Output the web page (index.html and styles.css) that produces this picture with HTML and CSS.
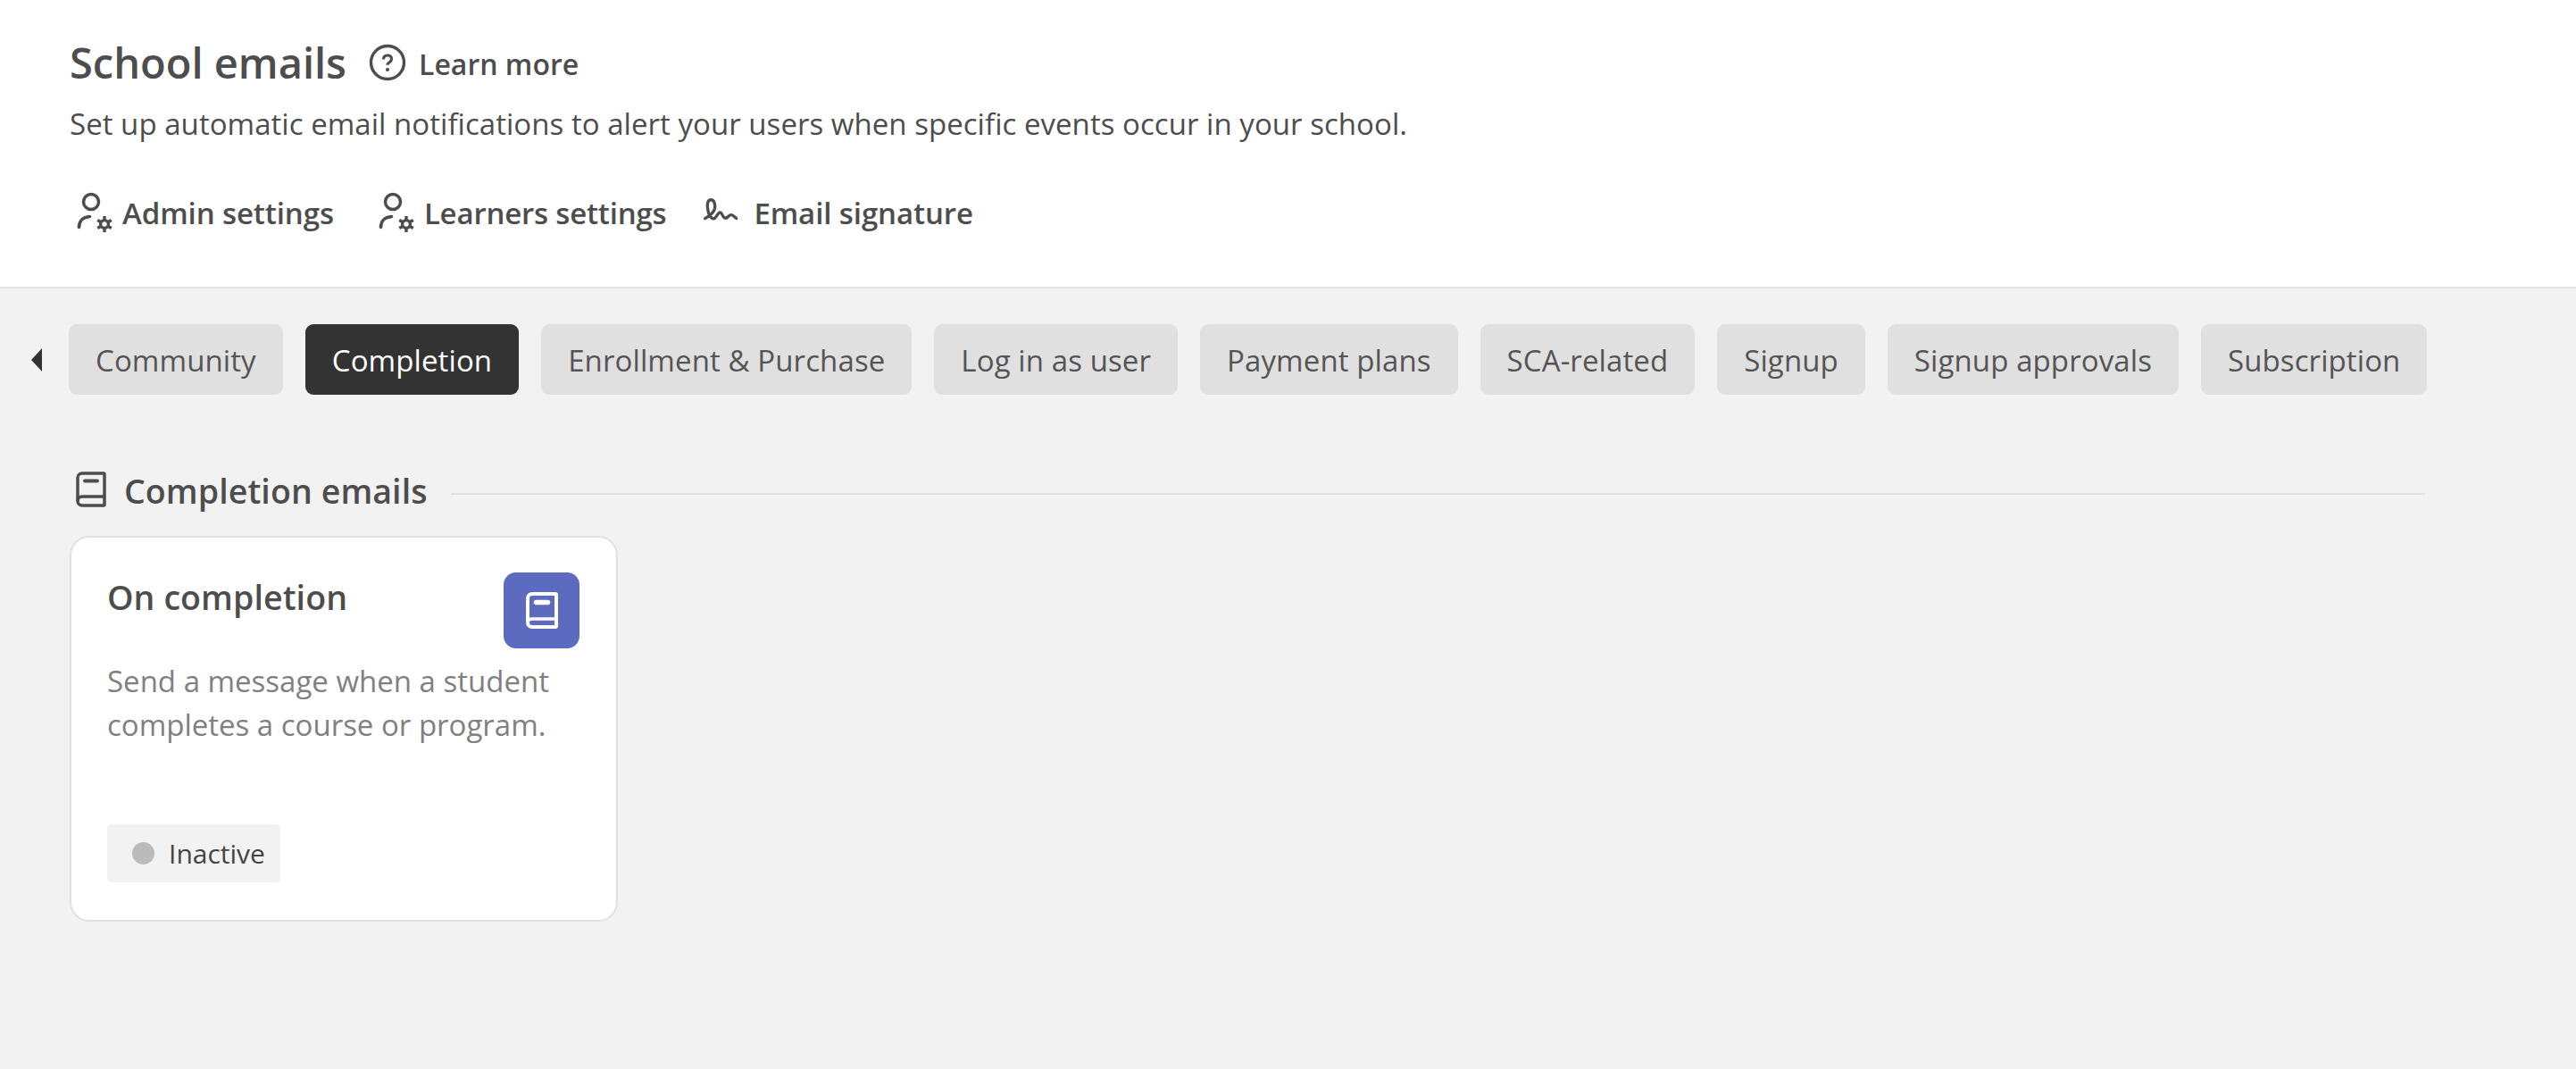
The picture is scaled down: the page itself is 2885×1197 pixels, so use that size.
FILE: index.html
```html
<!DOCTYPE html>
<html lang="en">
<head>
  <meta charset="UTF-8" />
  <title>School emails</title>
  <link rel="stylesheet" href="styles.css">
</head>
<body>

<svg class="defs" width="0" height="0">
  <defs>
    <g id="user-gear" fill="none" stroke="#4d4d4d">
      <circle cx="17" cy="13" r="8.5" stroke-width="3.5"/>
      <path d="M3.5 41.5c0-6.500 4-11.500 12-12" stroke-width="3.6" stroke-linecap="round"/>
      <circle cx="32" cy="38" r="4.400" stroke-width="3.4"/>
      <path d="M32 33v-4M32 43v4M36.300 35.500l3.500-2M36.300 40.500l3.500 2M27.700 35.500l-3.500-2M27.700 40.500l-3.500 2" stroke-width="3.4"/>
    </g>
  </defs>
</svg>

<header class="top">
  <div class="title-row">
    <h1>School emails</h1>
    <a class="learn">
      <svg class="help" viewBox="0 0 42 42"><circle cx="21" cy="21" r="18.500" fill="none" stroke="#4d4d4d" stroke-width="3.400"/><path d="M16.500 17.500c0-3 2-4.500 4.500-4.500s4.500 1.500 4.500 4c0 2-1 2.800-2.300 3.700-1.300.9-2.200 1.500-2.200 3" fill="none" stroke="#4d4d4d" stroke-width="3.200"/><circle cx="21" cy="29" r="2.100" fill="#4d4d4d"/></svg>
      <span>Learn more</span>
    </a>
  </div>
  <p class="sub">Set up automatic email notifications to alert your users when specific events occur in your school.</p>
  <nav class="links">
    <a class="link">
      <svg class="ico-user" viewBox="0 0 42 50"><use href="#user-gear"/></svg>
      Admin settings
    </a>
    <a class="link link-learners">
      <svg class="ico-user" viewBox="0 0 42 50"><use href="#user-gear"/></svg>
      Learners settings
    </a>
    <a class="link link-sign">
      <svg class="ico-sign" viewBox="24 48 130 84"><path d="M32 122c14-8 30-18 33-34 2-14-2-29-13-29S38 72 41 90c2 18 10 33 20 33 9 0 13-21 22-21 8 0 8 19 18 19 9 0 12-13 20-11 7 1 11 7 17 12" fill="none" stroke="#4d4d4d" stroke-width="10" stroke-linecap="round" stroke-linejoin="round"/></svg>
      Email signature
    </a>
  </nav>
</header>

<main class="content">
  <div class="tabs">
    <span class="arrow"></span>
    <a class="tab">Community</a>
    <a class="tab active">Completion</a>
    <a class="tab">Enrollment &amp; Purchase</a>
    <a class="tab">Log in as user</a>
    <a class="tab">Payment plans</a>
    <a class="tab">SCA-related</a>
    <a class="tab">Signup</a>
    <a class="tab">Signup approvals</a>
    <a class="tab">Subscription</a>
  </div>

  <div class="section-head">
    <svg class="ico-book" viewBox="0 0 34 40"><path d="M7 2h24a1 1 0 0 1 1 1v34a1 1 0 0 1-1 1H7a5 5 0 0 1-5-5V7a5 5 0 0 1 5-5z" fill="none" stroke="#4d4d4d" stroke-width="3.500"/><path d="M2 33c0-3 2-5 5-5h25" fill="none" stroke="#4d4d4d" stroke-width="3.500"/><path d="M10 10.500h14" stroke="#4d4d4d" stroke-width="4" stroke-linecap="round"/></svg>
    <h2>Completion emails</h2>
    <span class="rule"></span>
  </div>

  <article class="card">
    <div class="card-top">
      <h3>On completion</h3>
      <span class="tile">
        <svg viewBox="0 0 36 41"><path d="M7 2h26a1 1 0 0 1 1 1v35a1 1 0 0 1-1 1H7a5 5 0 0 1-5-5V7a5 5 0 0 1 5-5z" fill="none" stroke="#fff" stroke-width="4"/><path d="M2 34c0-2.500 2-4 5-4h27" fill="none" stroke="#fff" stroke-width="3.500"/><path d="M11.500 11.500h13" stroke="#fff" stroke-width="5.500" stroke-linecap="round"/></svg>
      </span>
    </div>
    <p class="desc">Send a message when a student completes a course or program.</p>
    <span class="status"><i class="dot"></i>Inactive</span>
  </article>
</main>

</body>
</html>
```

FILE: styles.css
```css
html, body { margin: 0; height: 100%; }
body {
  font-family: "Open Sans", "Noto Sans", sans-serif;
  color: #4d4d4d;
  background: #f2f2f2;
}
a { color: inherit; text-decoration: none; }
.defs { position: absolute; }

.top {
  background: #fff;
  height: 321px;
  padding-left: 78px;
  border-bottom: 2px solid #e4e4e4;
  overflow: hidden;
}
.title-row { display: flex; align-items: center; padding-top: 44px; height: 52px; }
h1 { margin: 0; font-size: 47px; font-weight: 600; line-height: 52px; }
.learn { display: flex; align-items: center; margin-left: 25px; font-size: 32px; font-weight: 600; gap: 14px; }
.learn span { padding-top: 3px; }
.help { width: 42px; height: 42px; }
.sub { margin: 21px 0 0; font-size: 33px; line-height: 44px; letter-spacing: 0.04px; }

.links { display: flex; margin-top: 51px; gap: 41px; padding-left: 7px; }
.link { display: flex; align-items: center; gap: 10px; font-size: 33px; font-weight: 600; letter-spacing: -0.1px; height: 52px; }
.link-learners { margin-left: 8px; letter-spacing: -0.2px; }
.ico-user { width: 42px; height: 50px; }
.ico-sign { width: 43px; height: 28px; margin-top: -8px; margin-right: 4px; }

.content { padding: 40px 0 0 35px; }
.tabs { display: flex; align-items: center; gap: 25px; }
.arrow {
  width: 0;
  height: 0;
  border-top: 13px solid transparent;
  border-bottom: 13px solid transparent;
  border-right: 12px solid #333;
  margin-right: 5px;
}
.tab {
  background: #e0e0e0;
  border-radius: 9px;
  height: 76px;
  line-height: 76px;
  padding: 3px 30px 0;
  font-size: 33px;
  letter-spacing: 0.1px;
  color: #555;
}
.tab.active { background: #333; color: #fff; }

.section-head { display: flex; align-items: center; margin-top: 84px; width: 2681px; height: 50px; }
.ico-book { width: 34px; height: 40px; margin: 0 0 6px 50px; }
h2 { margin: -2px 26px 0 20px; font-size: 37.5px; font-weight: 600; line-height: 50px; letter-spacing: 0.1px; white-space: nowrap; }
.rule { flex: 1; height: 2px; margin-top: 4px; background: #e0e0e0; }

.card {
  box-sizing: border-box;
  display: flex;
  flex-direction: column;
  width: 614px;
  height: 432px;
  margin: 24px 0 0 43px;
  background: #fff;
  border: 2px solid #e0e0e0;
  border-radius: 22px;
  padding: 39px 41px 42px 40px;
}
.card-top { display: flex; justify-content: space-between; align-items: flex-start; }
h3 { margin: 3px 0 0; font-size: 37.5px; font-weight: 600; line-height: 50px; letter-spacing: 0.1px; }
.tile {
  width: 85px;
  height: 85px;
  background: #5c6bc0;
  border-radius: 14px;
  display: flex;
  align-items: center;
  justify-content: center;
}
.tile svg { width: 36px; height: 41px; }
.desc { margin: 12px 0 0; font-size: 33px; line-height: 49px; color: #808080; width: 530px; }
.status {
  display: flex;
  align-items: center;
  align-self: flex-start;
  background: #f2f2f2;
  border-radius: 5px;
  height: 65px;
  margin-top: auto;
  padding: 0 17px 0 28px;
  font-size: 30px;
  color: #444;
}
.dot { width: 25px; height: 25px; border-radius: 50%; background: #bbb; margin-right: 16px; }
```
